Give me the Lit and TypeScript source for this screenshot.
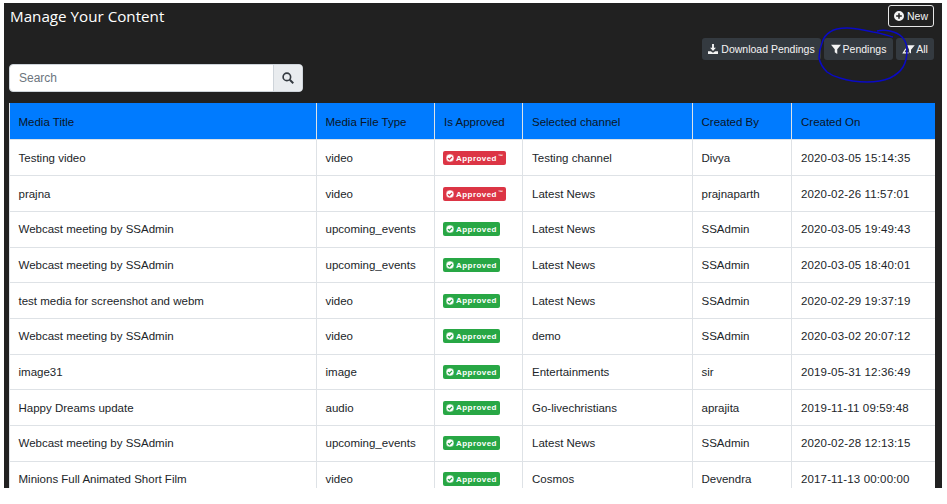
import { LitElement, css, html, svg } from "lit";
import { customElement } from "lit/decorators.js";

type Row = [string, string, boolean, string, string, string];

const rows: Row[] = [
  ["Testing video", "video", true, "Testing channel", "Divya", "2020-03-05 15:14:35"],
  ["prajna", "video", true, "Latest News", "prajnaparth", "2020-02-26 11:57:01"],
  ["Webcast meeting by SSAdmin", "upcoming_events", false, "Latest News", "SSAdmin", "2020-03-05 19:49:43"],
  ["Webcast meeting by SSAdmin", "upcoming_events", false, "Latest News", "SSAdmin", "2020-03-05 18:40:01"],
  ["test media for screenshot and webm", "video", false, "Latest News", "SSAdmin", "2020-02-29 19:37:19"],
  ["Webcast meeting by SSAdmin", "video", false, "demo", "SSAdmin", "2020-03-02 20:07:12"],
  ["image31", "image", false, "Entertainments", "sir", "2019-05-31 12:36:49"],
  ["Happy Dreams update", "audio", false, "Go-livechristians", "aprajita", "2019-11-11 09:59:48"],
  ["Webcast meeting by SSAdmin", "upcoming_events", false, "Latest News", "SSAdmin", "2020-02-28 12:13:15"],
  ["Minions Full Animated Short Film", "video", false, "Cosmos", "Devendra", "2017-11-13 00:00:00"],
];

const headers = ["Media Title", "Media File Type", "Is Approved", "Selected channel", "Created By", "Created On"];

const checkIcon = svg`<svg class="check" viewBox="0 0 16 16"><circle cx="8" cy="8" r="8" fill="#fff"/><path class="tick" d="M4 8.200l2.800 2.800L12 5.800" fill="none" stroke-width="2.600"/></svg>`;

@customElement("app-root")
export class AppRoot extends LitElement {
  static styles = css`
    :host {
      display: block;
      height: 504px;
      overflow: hidden;
      background: #fff;
      font-family: "Liberation Sans", Arial, sans-serif;
    }
    .panel {
      position: relative;
      height: 485px;
      margin: 3px 5px 0 4px;
      padding: 0 8px 0 5px;
      background: #212121;
      overflow: hidden;
      box-sizing: border-box;
    }
    .top {
      display: flex;
      justify-content: space-between;
      align-items: flex-start;
      height: 61px;
    }
    h1 {
      margin: 2px 0 0 1px;
      font-family: "Open Sans", sans-serif;
      font-size: 15.200px;
      font-weight: 400;
      line-height: 22px;
      color: #fff;
    }
    .actions {
      display: flex;
      flex-direction: column;
      align-items: flex-end;
      padding-top: 2px;
    }
    .btn {
      display: inline-flex;
      align-items: center;
      justify-content: center;
      gap: 3px;
      height: 22px;
      box-sizing: border-box;
      border-radius: 3px;
      background: #343a40;
      color: #f4f4f4;
      font-size: 10.500px;
      white-space: nowrap;
    }
    .btn svg {
      width: 10px;
      height: 10px;
      fill: currentColor;
      flex: none;
    }
    .new {
      width: 46px;
      margin-bottom: 11px;
      background: transparent;
      border: 1px solid #e8e8e8;
    }
    .download {
      width: 119px;
    }
    .pendings {
      width: 69px;
      gap: 2px;
    }
    .all {
      width: 38px;
      gap: 1px;
    }
    .all svg {
      width: 13px;
    }
    .btn-row {
      display: flex;
      gap: 3px;
    }
    .search {
      display: flex;
      width: 294px;
      height: 28px;
      margin-bottom: 11px;
      border-radius: 4px;
      overflow: hidden;
      border: 1px solid #ced4da;
      box-sizing: border-box;
      background: #fff;
    }
    .search .field {
      flex: 1;
      padding-left: 9px;
      font-size: 12px;
      line-height: 26px;
      color: #6c757d;
    }
    .search .go {
      display: flex;
      align-items: center;
      justify-content: center;
      width: 28px;
      background: #e9ecef;
      border-left: 1px solid #ced4da;
    }
    .search svg {
      width: 12px;
      height: 12px;
    }
    table {
      width: 925px;
      table-layout: fixed;
      border-collapse: collapse;
      background: #fff;
      font-size: 11.500px;
    }
    th {
      height: 36px;
      padding: 2px 8.500px 0;
      background: #007bff;
      color: #0b1526;
      font-weight: 400;
      text-align: left;
      border-left: 1px solid #dee2e6;
      box-sizing: border-box;
    }
    td {
      height: 35.670px;
      padding: 0 8.500px;
      color: #212529;
      text-align: left;
      border-top: 1px solid #dee2e6;
      border-left: 1px solid #dee2e6;
      white-space: nowrap;
      box-sizing: border-box;
    }
    th:nth-child(3),
    th:nth-child(4),
    th:nth-child(6),
    td:nth-child(4),
    td:nth-child(6) {
      padding-left: 9px;
    }
    td:nth-child(3) {
      padding-left: 8px;
    }
    td.date {
      letter-spacing: 0.140px;
    }
    tr.tall td {
      height: 36.300px;
      padding-top: 2px;
    }
    .badge {
      display: inline-flex;
      align-items: center;
      gap: 2px;
      height: 14px;
      padding: 0 3px;
      border-radius: 2px;
      background: #28a745;
      color: #fff;
      font-size: 8px;
      font-weight: 700;
      letter-spacing: 0.450px;
      vertical-align: middle;
    }
    .badge.red {
      background: #dc3545;
    }
    .badge sup {
      font-size: 5px;
      line-height: 0;
      letter-spacing: 0;
      margin: -5px 0 0 -1px;
    }
    .check {
      width: 8px;
      height: 8px;
      flex: none;
      stroke: #28a745;
    }
    .badge.red .check {
      stroke: #dc3545;
    }
    .scribble {
      position: absolute;
      left: 0;
      top: 0;
      width: 100%;
      height: 100%;
      pointer-events: none;
    }
  `;

  render() {
    return html`
      <div class="panel">
        <div class="top">
          <h1>Manage Your Content</h1>
          <div class="actions">
            <span class="btn new">
              <svg viewBox="0 0 16 16"><path d="M8 0a8 8 0 1 0 0 16A8 8 0 0 0 8 0zm4.500 9.200H9.200v3.300H6.800V9.200H3.500V6.800h3.300V3.500h2.400v3.300h3.300z"/></svg>
              New
            </span>
            <div class="btn-row">
              <span class="btn download">
                <svg viewBox="0 0 16 16"><path d="M6.500 0h3v6h3.200L8 11 3.300 6h3.200zM0 11.500h4.500L8 14l3.500-2.500H16V16H0z"/></svg>
                Download Pendings
              </span>
              <span class="btn pendings">
                <svg viewBox="0 0 16 16"><path d="M0 1h16L10 8.500V16l-4-3V8.500z"/></svg>
                Pendings
              </span>
              <span class="btn all">
                <svg viewBox="0 0 20 16"><path d="M8 2h12l-6 7v6l-3-2V9zM0 15l5-8 1.500 1-3 5H10v2z"/></svg>
                All
              </span>
            </div>
          </div>
        </div>
        <div class="search">
          <div class="field">Search</div>
          <div class="go">
            <svg viewBox="0 0 16 16"><circle cx="6.500" cy="6.500" r="5" fill="none" stroke="#343a40" stroke-width="2.200"/><path d="M10.300 10.300L15 15" stroke="#343a40" stroke-width="2.600"/></svg>
          </div>
        </div>
        <table>
          <colgroup>
            <col style="width:307px" /><col style="width:118px" /><col style="width:88px" />
            <col style="width:170px" /><col style="width:99px" /><col style="width:143px" />
          </colgroup>
          <thead>
            <tr>${headers.map((h) => html`<th>${h}</th>`)}</tr>
          </thead>
          <tbody>
            ${rows.map(
              (r) => html`
                <tr class=${r[2] ? "tall" : ""}>
                  <td>${r[0]}</td>
                  <td>${r[1]}</td>
                  <td>
                    <span class="badge ${r[2] ? "red" : ""}">
                      ${checkIcon}Approved${r[2] ? html`<sup>™</sup>` : ""}
                    </span>
                  </td>
                  <td>${r[3]}</td>
                  <td>${r[4]}</td>
                  <td class="date">${r[5]}</td>
                </tr>
              `,
            )}
          </tbody>
        </table>
        <svg class="scribble" viewBox="0 0 938 485">
          <path
            d="M889 34C882 32 876 30 869 29C860 27 851 25 843 25C835 25 830 26 826 29C821 32 819 36 818 40C816 45 815 50 815 55C816 60 819 65 823 69C827 72 831 74 836 75C845 78 854 79 863 79C871 79 879 78 886 75C892 72 896 69 899 64C902 59 903 53 903 47C903 42 901 37 898 34C895 31 891 29 886 28C881 27 877 27 873 28"
            fill="none"
            stroke="#0a0ac4"
            stroke-width="1.500"
          />
        </svg>
      </div>
    `;
  }
}
